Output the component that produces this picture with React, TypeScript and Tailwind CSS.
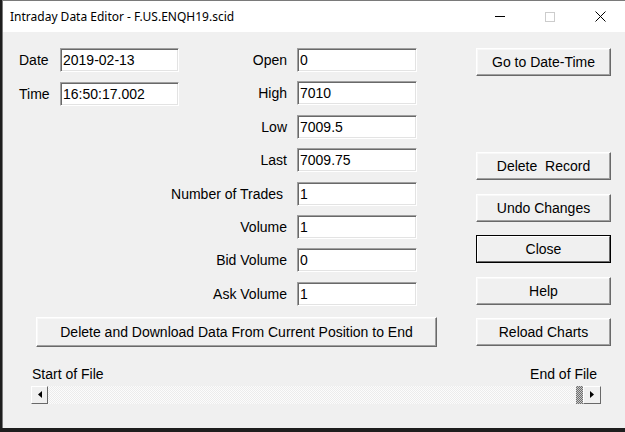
import React from "react";

const inputCls =
  "h-[24px] shrink-0 bg-white border border-t-[#a0a0a0] border-l-[#a0a0a0] border-b-white border-r-white shadow-[inset_1px_1px_0_#696969,inset_-1px_-1px_0_#e3e3e3] pl-[2px] flex items-center text-[14px] leading-none text-black whitespace-nowrap";

const btnCls =
  "h-[28px] w-full bg-[#f0f0f0] border border-t-white border-l-white border-b-[#696969] border-r-[#696969] shadow-[inset_-1px_-1px_0_#a0a0a0,inset_1px_1px_0_#f8f8f8] flex items-center justify-center text-[14px] leading-none text-black whitespace-nowrap";

function Field({ label, value }: { label: string; value: string }) {
  return (
    <div className="flex items-center justify-end h-[24px]">
      <span className="shrink-0 whitespace-pre text-[14px] leading-none mr-[10px]">{label}</span>
      <div className={inputCls + " w-[120px]"}>{value}</div>
    </div>
  );
}

export default function App() {
  const fields: [string, string][] = [
    ["Open", "0"],
    ["High", "7010"],
    ["Low", "7009.5"],
    ["Last", "7009.75"],
    ["Number of Trades ", "1"],
    ["Volume", "1"],
    ["Bid Volume", "0"],
    ["Ask Volume", "1"],
  ];
  return (
    <div
      className="w-[625px] h-[432px] bg-[#1e1e1e] flex flex-col overflow-hidden"
      style={{ fontFamily: '"Liberation Sans", Arial, sans-serif' }}
    >
      <div className="ml-[2px] h-[428px] flex flex-col border-l border-t border-[#7a7a7a] bg-[#f0f0f0]">
        {/* Title bar */}
        <div className="h-[31px] bg-white flex items-center relative shrink-0">
          <span
            className="pl-[7px] text-[12px] text-black"
            style={{ fontFamily: '"Noto Sans", "Open Sans", sans-serif' }}
          >
            Intraday Data Editor - F.US.ENQH19.scid
          </span>
          <div className="ml-auto flex items-center h-full">
            <div className="w-[50px] flex justify-center">
              <div className="w-[10px] h-px bg-black" />
            </div>
            <div className="w-[50px] flex justify-center">
              <div className="w-[10px] h-[10px] border border-[#cccccc]" />
            </div>
            <div className="w-[50px] flex justify-center">
              <svg width="11" height="11" viewBox="0 0 11 11">
                <path d="M0.5 0.5 L10.5 10.5 M10.5 0.5 L0.5 10.5" stroke="#000" strokeWidth="1" />
              </svg>
            </div>
          </div>
        </div>

        {/* Client */}
        <div className="flex-1 flex flex-col pt-[16px] text-black">
          <div className="flex">
            <div className="flex flex-col pl-[16px]">
              <div className="flex">
                <div className="w-[160px] flex flex-col gap-[10px]">
                  <div className="flex items-center h-[24px]">
                    <span className="w-[41px] text-[14px] leading-none">Date</span>
                    <div className={inputCls + " w-[119px]"}>2019-02-13</div>
                  </div>
                  <div className="flex items-center h-[24px]">
                    <span className="w-[41px] text-[14px] leading-none">Time</span>
                    <div className={inputCls + " w-[119px]"}>16:50:17.002</div>
                  </div>
                </div>
                <div className="w-[238px] flex flex-col gap-[9.4px]">
                  {fields.map(([l, v]) => (
                    <Field key={l} label={l} value={v} />
                  ))}
                </div>
              </div>
              <div className="mt-[11px] ml-[17px] w-[401px]">
                <div className={btnCls + " !h-[30px]"}>
                  Delete and Download Data From Current Position to End
                </div>
              </div>
            </div>
            <div className="ml-[39px] w-[135px] flex flex-col">
              <div className={btnCls}>Go to Date-Time</div>
              <div className="mt-[76px] flex flex-col gap-[13.5px]">
                <div className={btnCls}>Delete&nbsp; Record</div>
                <div className={btnCls}>Undo Changes</div>
                <div className="h-[28px] w-full border border-black">
                  <div className="h-full w-full bg-[#f0f0f0] border border-t-white border-l-white border-b-[#696969] border-r-[#696969] flex items-center justify-center text-[14px] leading-none">
                    Close
                  </div>
                </div>
                <div className={btnCls}>Help</div>
                <div className={btnCls}>Reload Charts</div>
              </div>
            </div>
          </div>

          {/* Scroll section */}
          <div className="mt-[19px] pl-[28px] pr-[24px]">
            <div className="flex justify-between pl-[1px] pr-[4px] h-[16px] items-center text-[14px] leading-none">
              <span>Start of File</span>
              <span>End of File</span>
            </div>
            <div className="mt-[4px] h-[18px] flex bg-[repeating-conic-gradient(#ececec_0_25%,#fcfcfc_0_50%)] bg-[length:2px_2px]">
              <div className="w-[17px] h-full bg-[#f0f0f0] border border-t-white border-l-white border-b-[#696969] border-r-[#696969] flex items-center justify-center">
                <svg width="4" height="7" viewBox="0 0 4 7">
                  <path d="M4 0 L0 3.5 L4 7 Z" fill="#000" />
                </svg>
              </div>
              <div className="flex-1" />
              <div className="w-[7px] h-full bg-[repeating-conic-gradient(#6e6e6e_0_25%,#c8c8c8_0_50%)] bg-[length:2px_2px]" />
              <div className="w-[18px] h-full bg-[#f0f0f0] border border-t-white border-l-white border-b-[#696969] border-r-[#696969] flex items-center justify-center">
                <svg width="4" height="7" viewBox="0 0 4 7">
                  <path d="M0 0 L4 3.5 L0 7 Z" fill="#000" />
                </svg>
              </div>
            </div>
          </div>
        </div>
      </div>
    </div>
  );
}
